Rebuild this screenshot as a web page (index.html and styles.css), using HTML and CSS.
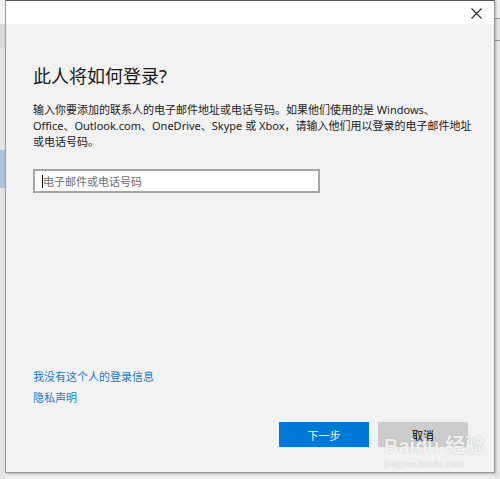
FILE: index.html
```html
<!DOCTYPE html>
<html lang="zh-CN">
<head>
<meta charset="utf-8">
<title>此人将如何登录?</title>
<link rel="stylesheet" href="styles.css">
</head>
<body>
<div class="desktop">
  <div class="bg-left">
    <span class="bg-sel"></span>
  </div>
  <div class="dialog">
    <div class="titlebar">
      <button class="close" aria-label="关闭">
        <svg width="11" height="11" viewBox="0 0 11 11"><path d="M0.5 0.5L10.5 10.5M10.5 0.5L0.5 10.5" stroke="#2b2b2b" stroke-width="1.1" fill="none"/></svg>
      </button>
    </div>
    <div class="content">
      <h1 class="title">此人将如何登录?</h1>
      <p class="desc">输入你要添加的联系人的电子邮件地址或电话号码。如果他们使用的是 Windows、<br>Office、Outlook.com、OneDrive、Skype 或 Xbox，请输入他们用以登录的电子邮件地址<br>或电话号码。</p>
      <div class="field"><span class="caret"></span><span class="placeholder">电子邮件或电话号码</span></div>
      <div class="spacer"></div>
      <a class="link">我没有这个人的登录信息</a>
      <a class="link link2">隐私声明</a>
      <div class="buttons">
        <button class="btn primary">下一步</button>
        <button class="btn secondary">取消</button>
      </div>
    </div>
    <div class="watermark">
      <div class="wm-logo">Bai<span class="wm-du">du</span> 经验</div>
      <div class="wm-url">jingyan.baidu.com</div>
    </div>
  </div>
  <div class="bg-right"></div>
</div>
</body>
</html>
```
FILE: styles.css
```css
html, body {
  margin: 0;
  padding: 0;
}
body {
  width: 500px;
  height: 479px;
  overflow: hidden;
  background: #ececec;
  font-family: "Noto Sans", "Noto Sans CJK SC", sans-serif;
}
.desktop {
  display: flex;
  height: 479px;
}
.bg-left {
  width: 5px;
  background: linear-gradient(#f4f4f4 0, #f4f4f4 24px, #dadada 24px, #dadada 48px, #e4e4e4 48px);
  position: relative;
}
.bg-sel {
  position: absolute;
  left: 0;
  top: 150px;
  width: 5px;
  height: 38px;
  background: #aec3da;
}
.dialog {
  position: relative;
  width: 488px;
  height: 471px;
  border: 1px solid #9a9a9a;
  border-top-color: #555;
  background: #f2f2f2;
  display: flex;
  flex-direction: column;
  box-shadow: 1px 1px 2px rgba(0,0,0,0.25);
}
.titlebar {
  height: 23px;
  background: #ffffff;
  display: flex;
  justify-content: flex-end;
  align-items: center;
}
.close {
  border: 0;
  background: transparent;
  padding: 0;
  width: 11px;
  height: 11px;
  margin-right: 12px;
  margin-top: 1px;
  display: flex;
}
.content {
  flex: 1;
  display: flex;
  flex-direction: column;
  padding: 0 27px 0 27px;
}
.title {
  margin: 40px 0 0 0;
  font-size: 18px;
  line-height: 24px;
  font-weight: 400;
  color: #1a1a1a;
}
.desc {
  margin: 14px 0 0 0;
  font-size: 11px;
  line-height: 16px;
  color: #1a1a1a;
  white-space: nowrap;
}
.field {
  margin-top: 19px;
  width: 276px;
  height: 20px;
  border: 2px solid #a6a6a6;
  background: #fff;
  display: flex;
  align-items: center;
  padding-left: 7px;
}
.caret {
  width: 1px;
  height: 13px;
  background: #000;
}
.placeholder {
  font-size: 11px;
  color: #6e6e6e;
}
.spacer {
  flex: 1;
}
.link {
  font-size: 11px;
  line-height: 16px;
  color: #1c79d2;
  cursor: pointer;
}
.link2 {
  margin-top: 5px;
}
.buttons {
  display: flex;
  justify-content: flex-end;
  gap: 9px;
  margin-top: 16px;
  margin-bottom: 25px;
  margin-right: -1px;
}
.btn {
  width: 90px;
  height: 25px;
  border: 0;
  font-family: inherit;
  font-size: 11px;
  padding: 0;
}
.primary {
  background: #0078d7;
  color: #fff;
}
.secondary {
  background: #cccccc;
  color: #000;
}
.watermark {
  position: absolute;
  left: 378px;
  top: 435px;
  color: rgba(255,255,255,0.85);
  text-shadow: 0 0 1px rgba(120,120,120,0.6);
  pointer-events: none;
}
.wm-logo {
  font-family: "Liberation Sans", "Noto Sans CJK SC", sans-serif;
  font-size: 20px;
  font-weight: 700;
  line-height: 20px;
}
.wm-du {
  font-weight: 700;
}
.wm-url {
  font-family: "Liberation Serif", serif;
  font-size: 10px;
  line-height: 12px;
  margin-top: 2px;
  color: rgba(255,255,255,0.9);
  letter-spacing: 0.3px;
}
.bg-right {
  flex: 1;
  background: linear-gradient(#ededed 0, #ededed 18px, #9a9a9a 18px, #9a9a9a 19px, #e2e2e2 19px, #e2e2e2 40px, #9a9a9a 40px, #9a9a9a 41px, #e6e6e6 41px);
}
```
